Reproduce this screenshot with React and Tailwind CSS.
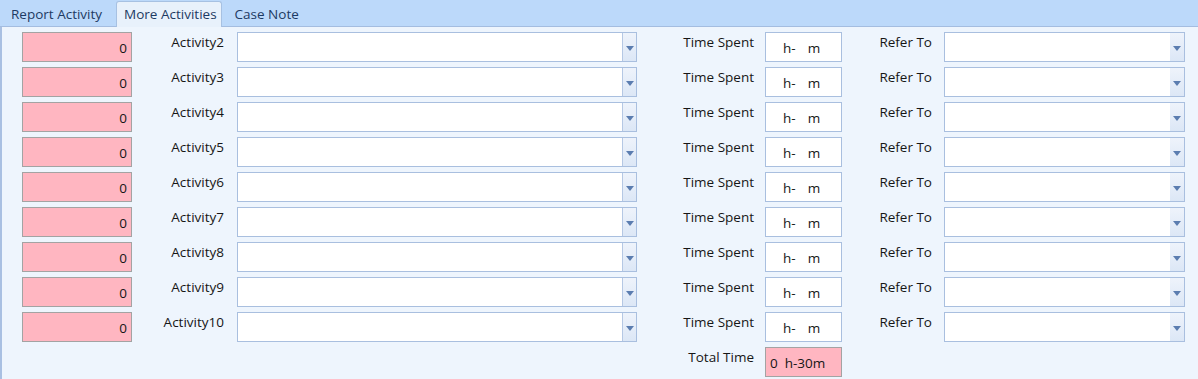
import React from "react";

function Arrow() {
  return (
    <svg width="8" height="5" viewBox="0 0 8 5" className="block">
      <path d="M0 0 H8 L4 5 Z" fill="#5b7db0" />
    </svg>
  );
}

function Combo({ width, sep }) {
  return (
    <div
      className={`flex h-[30px] ${width} border border-[#a9bfdf] bg-white`}
    >
      <div className="flex-1" />
      <div
        className={`flex w-[14px] items-center justify-center bg-gradient-to-b from-[#eef3fb] to-[#dce7f6] pt-[2px] ${
          sep ? "border-l border-[#b5c8e4]" : ""
        }`}
      >
        <Arrow />
      </div>
    </div>
  );
}

const rows = [2, 3, 4, 5, 6, 7, 8, 9, 10];

export default function App() {
  return (
    <div
      className="flex h-[379px] w-[1198px] flex-col bg-[#eef5fd] text-[13.5px] text-[#161616]"
      style={{ fontFamily: '"Open Sans", "Noto Sans", sans-serif' }}
    >
      <div className="flex h-[27px] items-end border-b border-[#a4bde0] bg-[#bcd9fa] pl-[2px]">
        <div className="flex h-[24px] items-center px-[9px] text-[#1d3a63]">Report Activity</div>
        <div className="relative top-[1px] ml-[5px] flex h-[26px] items-center rounded-t-[3px] border border-b-0 border-[#a7c1e2] bg-[#e8f1fb] pl-[7px] pr-[4px] text-[#1d3a63]">
          More Activities
        </div>
        <div className="flex h-[24px] items-center pl-[13px] text-[#1d3a63]">Case Note</div>
      </div>
      <div className="flex flex-1 flex-col gap-[5px] border-l-2 border-[#a9c0e2] pl-[20px] pt-[5px]">
        {rows.map((n) => (
          <div key={n} className="flex h-[30px] items-start">
            <div className="flex h-[30px] w-[110px] items-center justify-end border border-[#a3a3a3] bg-[#ffb6c1] pr-[4px] pt-[3px]">
              0
            </div>
            <div className="w-[105px] pr-[13px] text-right">Activity{n}</div>
            <Combo width="w-[400px]" sep />
            <div className="w-[128px] pr-[11px] text-right">Time Spent</div>
            <div className="flex h-[30px] w-[77px] items-center border border-[#a9bfdf] bg-white pl-[17px] pt-[3px]">
              <span>h-</span>
              <span className="ml-[12px]">m</span>
            </div>
            <div className="w-[102px] pr-[12px] text-right">Refer To</div>
            <Combo width="w-[241px]" />
          </div>
        ))}
        <div className="flex h-[30px] items-start">
          <div className="w-[615px]" />
          <div className="w-[128px] pr-[11px] text-right">Total Time</div>
          <div className="flex h-[30px] w-[77px] items-center border border-[#a3a3a3] bg-[#ffb6c1] pl-[4px] pt-[3px]">
            0&nbsp;&nbsp;h-30m
          </div>
        </div>
      </div>
    </div>
  );
}
